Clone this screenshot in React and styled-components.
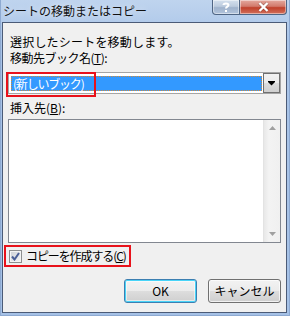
import React from "react";
import styled, { createGlobalStyle } from "styled-components";

const Global = createGlobalStyle`
  html, body { margin: 0; padding: 0; background: #fff; }
  body { font-family: "Noto Sans CJK JP", "Noto Sans", sans-serif; }
`;

const Window = styled.div`
  width: 290px;
  height: 316px;
  box-sizing: border-box;
  display: flex;
  flex-direction: column;
  background: linear-gradient(to bottom, #bfd4ee 0px, #a9c4e8 40px, #a5c1e6 100%);
  border-left: 1px solid #8eaad2;
  border-right: 1px solid #8eaad2;
  border-bottom: 1px solid #8eaad2;
  font-size: 12px;
  color: #000;
`;

const TitleBar = styled.div`
  height: 22px;
  flex: none;
  display: flex;
  align-items: flex-start;
  justify-content: space-between;
`;

const TitleText = styled.div`
  padding: 3px 0 0 2px;
  line-height: 16px;
  font-size: 12px;
  color: #111;
  text-shadow: 0 0 6px rgba(255, 255, 255, 0.8);
`;

const Controls = styled.div`
  display: flex;
  margin-right: 2px;
`;

const CtrlButton = styled.div`
  height: 15px;
  width: ${(p) => p.$w}px;
  box-sizing: border-box;
  display: flex;
  align-items: center;
  justify-content: center;
  border: 1px solid #4f6584;
  border-top: none;
  border-left: ${(p) => (p.$close ? "none" : "1px solid #4f6584")};
  border-radius: ${(p) => (p.$close ? "0 0 4px 0" : "0 0 0 4px")};
  background: ${(p) =>
    p.$close
      ? "linear-gradient(to bottom, #e4a99f 0%, #d27a6c 45%, #c0402b 55%, #d2705c 100%)"
      : "linear-gradient(to bottom, #d4e0ee 0%, #bccbde 45%, #9fb2cc 55%, #b2c4dc 100%)"};
  box-shadow: inset 0 0 0 1px rgba(255, 255, 255, 0.45);
`;

const Client = styled.div`
  flex: 1;
  margin: 0 2px 2px 1px;
  border: 1px solid #4b5b77;
  background: #f0f0f0;
  display: flex;
  flex-direction: column;
  padding: 11px 5px 0 5px;
  box-sizing: border-box;
`;

const Label = styled.div`
  margin-left: 2px;
  margin-top: ${(p) => p.$mt || 0}px;
  line-height: 16px;
  height: 16px;
  white-space: nowrap;
  letter-spacing: ${(p) => p.$ls || 0}px;
`;

const U = styled.span`
  text-decoration: underline;
  text-underline-offset: 1px;
`;

const ComboWrap = styled.div`
  position: relative;
  margin-top: 6px;
  height: 22px;
  display: flex;
  box-sizing: border-box;
  border: 1px solid #a5a5a5;
  background: #fff;
`;

const ComboField = styled.div`
  flex: 1;
  padding: 3px 1px 2px 2px;
  display: flex;
`;

const Selection = styled.div`
  flex: 1;
  background: #3399ff;
  color: #fff;
  line-height: 13px;
  height: 15px;
  box-sizing: border-box;
  border: 1px dotted #d08a3a;
  padding-left: 1px;
  white-space: nowrap;
  letter-spacing: -1.2px;
`;

const DropButton = styled.div`
  width: 17px;
  box-sizing: border-box;
  border: 1px solid #707070;
  background: linear-gradient(to bottom, #f2f2f2 0%, #ebebeb 50%, #dddddd 51%, #cfcfcf 100%);
  display: flex;
  align-items: center;
  justify-content: center;
`;

const RedBox = styled.div`
  position: absolute;
  left: -3px;
  top: -1px;
  width: 90px;
  height: 25px;
  box-sizing: border-box;
  border: 2px solid #e8121b;
  pointer-events: none;
`;

const ListBox = styled.div`
  margin-top: 3px;
  height: 124px;
  flex: none;
  box-sizing: border-box;
  border: 1px solid #828790;
  background: #fff;
  display: flex;
  justify-content: flex-end;
`;

const ScrollBar = styled.div`
  width: 17px;
  background: linear-gradient(to right, #e8e8e8, #f3f3f3 30%, #f0f0f0);
  border-left: 1px solid #e3e3e3;
  display: flex;
  flex-direction: column;
  justify-content: space-between;
  align-items: center;
  padding: 6px 0;
  box-sizing: border-box;
`;

const CheckRow = styled.label`
  margin-top: 2px;
  align-self: flex-start;
  margin-left: -4px;
  height: 22px;
  box-sizing: border-box;
  border: 2px solid #e8121b;
  display: flex;
  align-items: center;
  gap: 4px;
  padding: 0 3px 0 3px;
  line-height: 16px;
  white-space: nowrap;
`;

const CheckText = styled.span`
  letter-spacing: -1.1px;
`;

const CheckBox = styled.div`
  width: 13px;
  height: 13px;
  box-sizing: border-box;
  border: 1px solid #8e8f8f;
  background: linear-gradient(135deg, #cbcfd5 0%, #f6f6f6 100%);
  box-shadow: inset 0 0 0 1px #f4f4f4;
  display: flex;
  align-items: center;
  justify-content: center;
`;

const ButtonRow = styled.div`
  margin-top: 12px;
  display: flex;
  justify-content: flex-end;
  gap: 11px;
`;

const PushButton = styled.div`
  width: 73px;
  height: 24px;
  box-sizing: border-box;
  border: 1px solid ${(p) => (p.$default ? "#3c7fb1" : "#707070")};
  border-radius: 3px;
  background: linear-gradient(to bottom, #f2f2f2 0%, #ebebeb 50%, #dddddd 51%, #cfcfcf 100%);
  box-shadow: ${(p) =>
    p.$default
      ? "inset 0 0 0 1px #48d4f8, inset 0 0 0 2px rgba(255,255,255,0.5)"
      : "inset 0 0 0 1px rgba(255,255,255,0.7)"};
  display: flex;
  align-items: center;
  justify-content: center;
  line-height: 16px;
`;

export default function App() {
  return (
    <>
      <Global />
      <Window>
        <TitleBar>
          <TitleText>シートの移動またはコピー</TitleText>
          <Controls>
            <CtrlButton $w={28}>
              <svg width="8" height="10" viewBox="0 0 8 10">
                <path
                  d="M1.5 3 C1.5 1 6.5 1 6.5 3 C6.5 4.6 4 4.6 4 6.5"
                  fill="none"
                  stroke="#fff"
                  strokeWidth="2"
                />
                <rect x="3" y="8" width="2" height="2" fill="#fff" />
              </svg>
            </CtrlButton>
            <CtrlButton $w={47} $close>
              <svg width="11" height="10" viewBox="0 0 11 10">
                <path
                  d="M1.5 1 L9.5 9 M9.5 1 L1.5 9"
                  stroke="#3a1a14"
                  strokeWidth="3.4"
                  opacity="0.35"
                />
                <path d="M1.5 1 L9.5 9 M9.5 1 L1.5 9" stroke="#fff" strokeWidth="2.4" />
              </svg>
            </CtrlButton>
          </Controls>
        </TitleBar>
        <Client>
          <Label $ls={0.2}>選択したシートを移動します。</Label>
          <Label $ls={-0.5}>
            移動先ブック名(<U>T</U>):
          </Label>
          <ComboWrap>
            <ComboField>
              <Selection>(新しいブック)</Selection>
            </ComboField>
            <DropButton>
              <svg width="7" height="5" viewBox="0 0 7 5">
                <path d="M0 0 H7 V1 L3.5 4.5 L0 1 Z" fill="#000" />
              </svg>
            </DropButton>
            <RedBox />
          </ComboWrap>
          <Label $mt={6}>
            挿入先(<U>B</U>):
          </Label>
          <ListBox>
            <ScrollBar>
              <svg width="7" height="4" viewBox="0 0 7 4">
                <path d="M3.5 0 L7 4 H0 Z" fill="#a0a0a0" />
              </svg>
              <svg width="7" height="4" viewBox="0 0 7 4">
                <path d="M0 0 H7 L3.5 4 Z" fill="#a0a0a0" />
              </svg>
            </ScrollBar>
          </ListBox>
          <CheckRow>
            <CheckBox>
              <svg width="9" height="9" viewBox="0 0 9 9">
                <path
                  d="M1 4.5 L3.5 7.5 L8 1"
                  fill="none"
                  stroke="#4a5f97"
                  strokeWidth="2"
                />
              </svg>
            </CheckBox>
            <CheckText>
              コピーを作成する(<U>C</U>)
            </CheckText>
          </CheckRow>
          <ButtonRow>
            <PushButton $default>OK</PushButton>
            <PushButton>キャンセル</PushButton>
          </ButtonRow>
        </Client>
      </Window>
    </>
  );
}
